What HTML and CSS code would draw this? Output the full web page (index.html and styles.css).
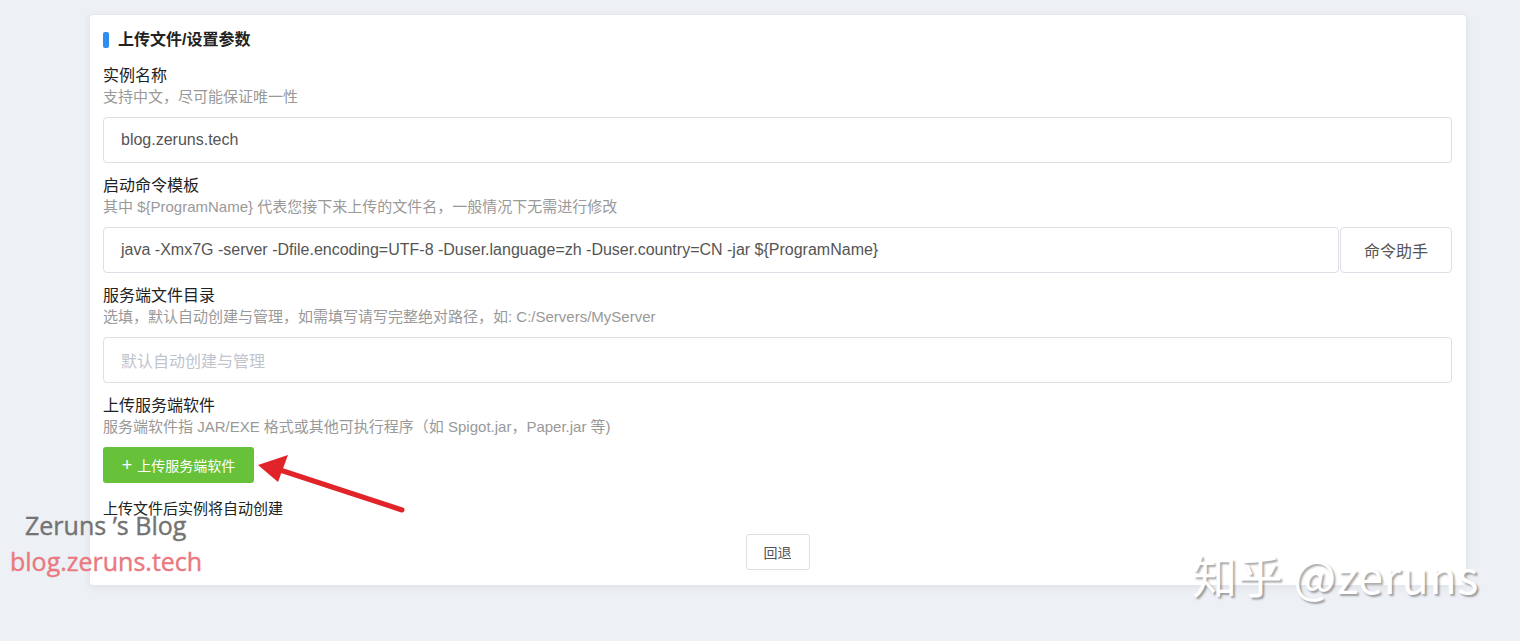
FILE: index.html
```html
<!DOCTYPE html>
<html lang="zh-CN">
<head>
    <meta charset="UTF-8">
    <meta name="viewport" content="width=device-width, initial-scale=1.0">
    <title>上传文件/设置参数</title>
    <link rel="stylesheet" href="styles.css">
</head>
<body>
    <div class="card">
        <h3 class="card-title"><span class="title-bar"></span>上传文件/设置参数</h3>

        <div class="field">
            <div class="field-label">实例名称</div>
            <div class="field-desc">支持中文，尽可能保证唯一性</div>
            <div class="input">blog.zeruns.tech</div>
        </div>

        <div class="field">
            <div class="field-label">启动命令模板</div>
            <div class="field-desc">其中 ${ProgramName} 代表您接下来上传的文件名，一般情况下无需进行修改</div>
            <div class="input-group">
                <div class="input">java -Xmx7G -server -Dfile.encoding=UTF-8 -Duser.language=zh -Duser.country=CN -jar ${ProgramName}</div>
                <button class="append-btn">命令助手</button>
            </div>
        </div>

        <div class="field">
            <div class="field-label">服务端文件目录</div>
            <div class="field-desc">选填，默认自动创建与管理，如需填写请写完整绝对路径，如: C:/Servers/MyServer</div>
            <div class="input placeholder">默认自动创建与管理</div>
        </div>

        <div class="field">
            <div class="field-label">上传服务端软件</div>
            <div class="field-desc">服务端软件指 JAR/EXE 格式或其他可执行程序（如 Spigot.jar，Paper.jar 等)</div>
            <button class="upload-btn"><span class="plus">+</span>上传服务端软件</button>
        </div>

        <p class="hint">上传文件后实例将自动创建</p>

        <div class="actions">
            <button class="back-btn">回退</button>
        </div>
    </div>

    <!-- annotation arrow -->
    <svg class="arrow" width="170" height="70" viewBox="0 0 170 70">
        <line x1="148" y1="58" x2="20" y2="16" stroke="#e0242a" stroke-width="5" stroke-linecap="round"/>
        <polygon points="4,13 34,3 24,30" fill="#e0242a"/>
    </svg>

    <div class="mark-blog">
        <div class="mark-name">Zeruns ’s Blog</div>
        <div class="mark-url">blog.zeruns.tech</div>
    </div>
    <div class="mark-zhihu">知乎 @zeruns</div>
</body>
</html>
```
FILE: styles.css
```css
* {
    box-sizing: border-box;
    margin: 0;
    padding: 0;
}

body {
    font-family: "Liberation Sans", "Noto Sans CJK SC", sans-serif;
    background-color: #edf0f4;
    padding: 14px 0 0 89px;
    min-height: 100vh;
    position: relative;
    color: #222;
}

.card {
    width: 1378px;
    background: #fff;
    border: 1px solid #e4e7ed;
    border-radius: 4px;
    box-shadow: 0 2px 8px rgba(0, 0, 0, 0.06);
    padding: 10px 14px 15px 13px;
}

.card-title {
    display: flex;
    align-items: center;
    font-size: 16px;
    font-weight: bold;
    line-height: 30px;
    margin-bottom: 11px;
    color: #222;
}

.title-bar {
    width: 6px;
    height: 16px;
    background: #2c8ff0;
    border-radius: 2px;
    margin-right: 9px;
}

.field {
    margin-bottom: 13px;
}

.field-label {
    font-size: 16px;
    line-height: 20px;
    color: #222;
}

.field-desc {
    font-size: 15px;
    line-height: 22px;
    color: #999;
    margin-bottom: 9px;
}

.input {
    height: 46px;
    border: 1px solid #dcdfe6;
    border-radius: 4px;
    padding: 0 17px;
    display: flex;
    align-items: center;
    font-size: 16px;
    color: #555;
}

.input.placeholder {
    color: #c0c4cc;
}

.input-group {
    display: flex;
    gap: 1px;
}

.input-group .input {
    flex: 1;
}

.append-btn {
    width: 112px;
    height: 46px;
    border: 1px solid #dcdfe6;
    border-radius: 4px;
    background: #fff;
    font-family: inherit;
    font-size: 16px;
    color: #555;
}

.upload-btn {
    width: 151px;
    height: 36px;
    border: none;
    border-radius: 3px;
    background: #67c23a;
    color: #fff;
    font-family: inherit;
    font-size: 14px;
    display: flex;
    align-items: center;
    justify-content: center;
}

.plus {
    font-size: 18px;
    font-weight: 300;
    margin-right: 5px;
    line-height: 1;
}

.hint {
    margin-top: 16px;
    font-size: 15px;
    line-height: 20px;
    color: #222;
}

.actions {
    display: flex;
    justify-content: center;
    margin-top: 15px;
}

.back-btn {
    width: 64px;
    height: 36px;
    border: 1px solid #dcdfe6;
    border-radius: 3px;
    background: #fff;
    font-family: inherit;
    font-size: 14px;
    color: #555;
}

.arrow {
    position: absolute;
    left: 254px;
    top: 452px;
}

.mark-blog {
    position: absolute;
    left: 10px;
    top: 508px;
    font-family: "Open Sans", "Noto Sans", sans-serif;
    -webkit-text-stroke: 0.4px currentColor;
}

.mark-name {
    font-size: 25px;
    line-height: 34px;
    color: #737373;
    margin-left: 15px;
}

.mark-url {
    font-size: 25px;
    line-height: 38px;
    color: #ea7880;
}

.mark-zhihu {
    position: absolute;
    left: 1192px;
    top: 545px;
    font-family: "Noto Sans CJK SC", sans-serif;
    font-size: 45px;
    line-height: 60px;
    letter-spacing: 0.5px;
    color: #fff;
    text-shadow: 2px 2px 2px rgba(0, 0, 0, 0.35);
}
```
